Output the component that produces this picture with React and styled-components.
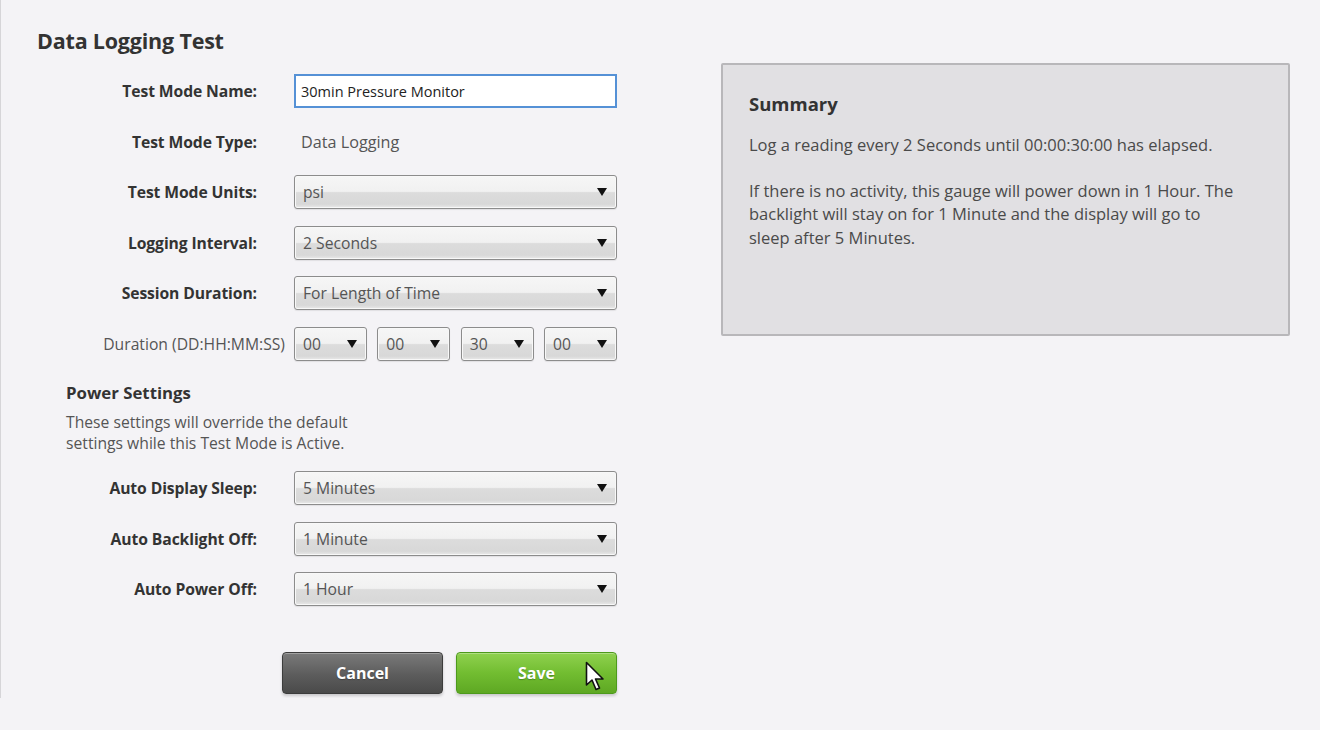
import React from "react";
import styled, { createGlobalStyle } from "styled-components";

const GlobalStyle = createGlobalStyle`
  html, body {
    margin: 0;
    padding: 0;
    background: #f4f3f6;
  }
  body {
    font-family: "Open Sans", "Noto Sans", sans-serif;
    color: #3a3a3a;
  }
`;

const durationParts = ["00", "00", "30", "00"];

const Select = ({ value, small }) => (
  <SelectBox $small={small}>
    <SelectText>{value}</SelectText>
    <Arrow />
  </SelectBox>
);

const Cursor = () => (
  <CursorSvg width="20" height="32" viewBox="0 0 20 32">
    <path
      d="M1.5 1.5 L1.5 24 L7 19 L11 28.5 L14.5 27 L10.5 18 L18 18 Z"
      fill="#ffffff"
      stroke="#111111"
      strokeWidth="1.6"
      strokeLinejoin="round"
    />
  </CursorSvg>
);

const App = () => {
  return (
    <>
      <GlobalStyle />
      <Page>
        <LeftColumn>
          <Title>Data Logging Test</Title>
          <FormGrid>
            <Label>Test Mode Name:</Label>
            <TextInput defaultValue="30min Pressure Monitor" />

            <Label>Test Mode Type:</Label>
            <StaticValue>Data Logging</StaticValue>

            <Label>Test Mode Units:</Label>
            <Select value="psi" />

            <Label>Logging Interval:</Label>
            <Select value="2 Seconds" />

            <Label>Session Duration:</Label>
            <Select value="For Length of Time" />

            <Label $plain>Duration (DD:HH:MM:SS)</Label>
            <DurationRow>
              {durationParts.map((p, i) => (
                <Select key={i} value={p} small />
              ))}
            </DurationRow>
          </FormGrid>

          <PowerSection>
            <SectionTitle>Power Settings</SectionTitle>
            <SectionText>
              These settings will override the default
              <br />
              settings while this Test Mode is Active.
            </SectionText>
          </PowerSection>

          <FormGrid>
            <Label>Auto Display Sleep:</Label>
            <Select value="5 Minutes" />

            <Label>Auto Backlight Off:</Label>
            <Select value="1 Minute" />

            <Label>Auto Power Off:</Label>
            <Select value="1 Hour" />
          </FormGrid>

          <ButtonRow>
            <Button $variant="cancel">Cancel</Button>
            <Button $variant="save">
              Save
              <Cursor />
            </Button>
          </ButtonRow>
        </LeftColumn>

        <RightColumn>
          <SummaryPanel>
            <SummaryTitle>Summary</SummaryTitle>
            <SummaryText>
              Log a reading every 2 Seconds until 00:00:30:00 has elapsed.
            </SummaryText>
            <SummaryText>
              If there is no activity, this gauge will power down in 1 Hour. The
              backlight will stay on for 1 Minute and the display will go to
              sleep after 5 Minutes.
            </SummaryText>
          </SummaryPanel>
        </RightColumn>
      </Page>
    </>
  );
};

const Page = styled.div`
  display: flex;
  height: 698px;
  box-sizing: border-box;
  border-left: 1px solid #d6d5d8;
  padding: 27px 0 0 36px;
`;

const LeftColumn = styled.div`
  width: 580px;
  display: flex;
  flex-direction: column;
`;

const Title = styled.h1`
  margin: 0 0 19px 0;
  font-size: 21.5px;
  font-weight: 700;
  color: #333;
  line-height: 28px;
  letter-spacing: -0.2px;
`;

const FormGrid = styled.div`
  display: grid;
  grid-template-columns: 220px 323px;
  column-gap: 37px;
  row-gap: 16.6px;
  align-items: center;
`;

const Label = styled.div`
  text-align: right;
  font-size: 15.7px;
  font-weight: ${(p) => (p.$plain ? 400 : 700)};
  color: ${(p) => (p.$plain ? "#555" : "#333")};
  margin-right: ${(p) => (p.$plain ? "-28px" : "0")};
  letter-spacing: ${(p) => (p.$plain ? "0" : "-0.1px")};
  white-space: nowrap;
`;

const TextInput = styled.input`
  box-sizing: border-box;
  height: 34px;
  width: 100%;
  border: 2px solid #5591d6;
  background: #fff;
  padding: 0 5px;
  font-family: inherit;
  font-size: 14.5px;
  color: #222;
  outline: none;
`;

const StaticValue = styled.div`
  height: 34px;
  line-height: 34px;
  padding-left: 7px;
  font-size: 16.2px;
  color: #555;
`;

const SelectBox = styled.div`
  box-sizing: border-box;
  height: 34px;
  width: ${(p) => (p.$small ? "73px" : "100%")};
  border: 1px solid #8c8c8c;
  border-radius: 3px;
  background: linear-gradient(
    to bottom,
    #f6f6f6 0%,
    #f1f1f1 48%,
    #dcdcdc 52%,
    #d8d8d8 88%,
    #eaeaea 100%
  );
  box-shadow: inset 0 0 0 1px #f8f8f8, 0 1px 1px rgba(0, 0, 0, 0.08);
  display: flex;
  align-items: center;
  justify-content: space-between;
  padding: 0 9px 0 8px;
`;

const SelectText = styled.span`
  font-size: 15.7px;
  color: #555;
`;

const Arrow = styled.span`
  width: 0;
  height: 0;
  border-left: 5.5px solid transparent;
  border-right: 5.5px solid transparent;
  border-top: 8px solid #111;
`;

const DurationRow = styled.div`
  display: flex;
  justify-content: space-between;
`;

const PowerSection = styled.div`
  padding: 21px 0 17px 29px;
`;

const SectionTitle = styled.h2`
  margin: 0 0 8px 0;
  font-size: 16.8px;
  font-weight: 700;
  color: #333;
  line-height: 22px;
`;

const SectionText = styled.p`
  margin: 0;
  font-size: 15.7px;
  line-height: 21px;
  color: #555;
`;

const ButtonRow = styled.div`
  display: flex;
  justify-content: flex-end;
  gap: 13px;
  margin-top: 46px;
  width: 580px;
`;

const Button = styled.button`
  position: relative;
  width: 161px;
  height: 42px;
  border-radius: 4px;
  font-family: inherit;
  font-size: 16px;
  font-weight: 700;
  color: #fff;
  cursor: pointer;
  border: 1px solid
    ${(p) => (p.$variant === "save" ? "#4d9a1c" : "#3c3c3c")};
  background: ${(p) =>
    p.$variant === "save"
      ? "linear-gradient(to bottom, #8fd14f 0%, #72bd31 50%, #5ea823 100%)"
      : "linear-gradient(to bottom, #7a7a7a 0%, #5c5c5c 55%, #4a4a4a 100%)"};
  box-shadow: inset 0 1px 0 rgba(255, 255, 255, 0.3),
    0 2px 3px rgba(0, 0, 0, 0.18);
  text-shadow: 0 1px 1px rgba(0, 0, 0, 0.25);
`;

const CursorSvg = styled.svg`
  position: absolute;
  left: 128px;
  top: 8px;
`;

const RightColumn = styled.div`
  padding: 36px 0 0 104px;
`;

const SummaryPanel = styled.div`
  box-sizing: border-box;
  width: 569px;
  height: 273px;
  background: #e1e0e3;
  border: 2px solid #b8b7ba;
  border-radius: 2px;
  padding: 26px 26px;
`;

const SummaryTitle = styled.h3`
  margin: 0 0 16px 0;
  font-size: 18.5px;
  font-weight: 700;
  color: #333;
  line-height: 26px;
`;

const SummaryText = styled.p`
  max-width: 490px;
  margin: 0 0 22px 0;
  font-size: 16.5px;
  line-height: 23.5px;
  color: #4a4a4a;
`;

export default App;
